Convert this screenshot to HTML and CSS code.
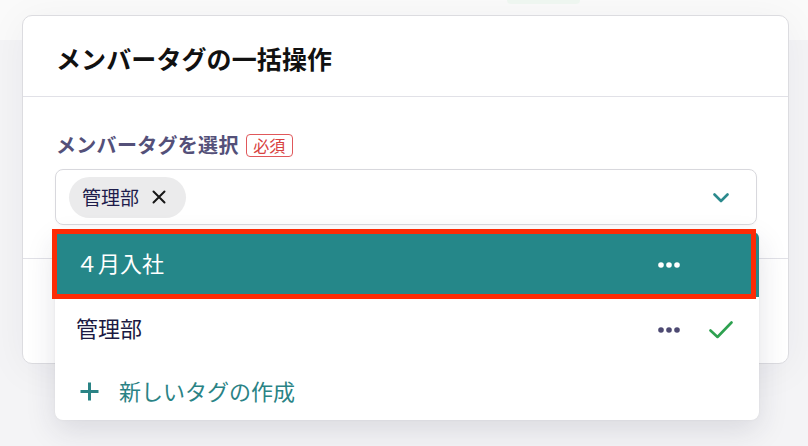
FILE: index.html
```html
<!DOCTYPE html>
<html lang="ja">
<head>
<meta charset="utf-8">
<link rel="stylesheet" href="styles.css">
</head>
<body>
<div class="top-strip"><span class="top-pill"></span></div>
<section class="card">
  <header class="card-head">
    <h1 class="card-title">メンバータグの一括操作</h1>
  </header>
  <div class="card-body">
    <div class="field-label">
      <span class="label-text">メンバータグを選択</span>
      <span class="badge">必須</span>
    </div>
    <div class="select-wrap">
      <div class="select">
        <span class="chip">
          <span class="chip-text">管理部</span>
          <svg class="chip-x" width="14" height="14" viewBox="0 0 14 14"><path d="M1.5 1.5 L12.5 12.5 M12.5 1.5 L1.5 12.5" stroke="#161616" stroke-width="2" stroke-linecap="round" fill="none"/></svg>
        </span>
        <svg class="chevron" width="16" height="10" viewBox="0 0 16 10"><path d="M1.5 1.5 L8 8 L14.5 1.5" stroke="#2b8a8d" stroke-width="2.6" stroke-linecap="round" stroke-linejoin="round" fill="none"/></svg>
      </div>
      <div class="menu">
        <div class="menu-item active">
          <span class="item-text">４月入社</span>
          <svg class="dots" width="22" height="6" viewBox="0 0 22 6"><circle cx="3" cy="3" r="2.8" fill="#fff"/><circle cx="11" cy="3" r="2.8" fill="#fff"/><circle cx="19" cy="3" r="2.8" fill="#fff"/></svg>
          <span class="check-slot"></span>
        </div>
        <div class="menu-item">
          <span class="item-text">管理部</span>
          <svg class="dots" width="22" height="6" viewBox="0 0 22 6"><circle cx="3" cy="3" r="2.8" fill="#4d4a72"/><circle cx="11" cy="3" r="2.8" fill="#4d4a72"/><circle cx="19" cy="3" r="2.8" fill="#4d4a72"/></svg>
          <span class="check-slot"><svg width="24" height="18" viewBox="0 0 24 18"><path d="M1.5 9.5 L8.5 16 L22.5 1.5" stroke="#2ea150" stroke-width="2.6" stroke-linecap="round" stroke-linejoin="round" fill="none"/></svg></span>
        </div>
        <div class="menu-create">
          <svg class="plus" width="19" height="19" viewBox="0 0 19 19"><path d="M9.5 0.5 V18.5 M0.5 9.5 H18.5" stroke="#2a8385" stroke-width="3" fill="none"/></svg>
          <span class="create-text">新しいタグの作成</span>
        </div>
        <div class="annotation"></div>
      </div>
    </div>
  </div>
  <footer class="card-foot"></footer>
</section>
</body>
</html>
```
FILE: styles.css
```css
* { box-sizing: border-box; }
html, body { margin: 0; padding: 0; }
body {
  width: 808px;
  height: 446px;
  overflow: hidden;
  background: linear-gradient(#fafafa 0 40px, #f4f4f6 40px);
  font-family: "Noto Sans CJK JP", "Noto Sans", sans-serif;
}
.top-strip {
  height: 15px;
  display: flex;
}
.top-pill {
  display: block;
  margin-left: 507px;
  width: 73px;
  height: 4px;
  background: #eef6f0;
  border-radius: 0 0 6px 6px;
}
.card {
  margin-left: 22px;
  width: 767px;
  background: #fff;
  border: 1px solid #dcdce0;
  border-radius: 10px;
  box-shadow: 0 6px 40px rgba(30, 30, 60, 0.05);
}
.card-head {
  height: 81px;
  border-bottom: 1px solid #e1e1e7;
  display: flex;
  align-items: center;
  padding-left: 33px;
}
.card-title {
  margin: 0;
  font-size: 25px;
  font-weight: 700;
  letter-spacing: 0.1px;
  color: #111;
  line-height: 1;
  padding-top: 4px;
}
.card-body {
  padding: 37px 31px 33px 32px;
  border-bottom: 1px solid #e1e1e7;
}
.field-label {
  display: flex;
  align-items: center;
  height: 23px;
  margin-bottom: 12px;
}
.label-text {
  font-size: 20px;
  font-weight: 700;
  letter-spacing: 0.3px;
  color: #545079;
  margin-left: 1px;
  margin-right: 7px;
  line-height: 1;
  padding-bottom: 2px;
}
.badge {
  height: 23px;
  width: 47px;
  border: 1px solid #e0585b;
  border-radius: 4px;
  color: #d8423f;
  font-size: 16px;
  line-height: 20px;
  text-align: center;
}
.select-wrap {
  position: relative;
}
.select {
  height: 56px;
  border: 1px solid #d8d8dd;
  border-radius: 8px;
  display: flex;
  align-items: center;
  justify-content: space-between;
  padding: 0 27px 0 13px;
  box-shadow: 0 1px 3px rgba(0,0,0,0.03);
}
.chip {
  height: 41px;
  width: 117px;
  border-radius: 21px;
  background: #ebebec;
  display: flex;
  align-items: center;
  padding-left: 13px;
}
.chip-text {
  font-size: 19px;
  color: #1e1c4b;
  margin-right: 13px;
  line-height: 1;
  padding-bottom: 2px;
}
.chevron { margin-top: 1px; }
.menu {
  position: absolute;
  top: 63px;
  left: 0;
  width: 704px;
  height: 188px;
  background: #fff;
  border-radius: 8px;
  box-shadow: 0 10px 30px rgba(40, 40, 70, 0.13), 0 0 3px rgba(0,0,0,0.05);
  display: flex;
  flex-direction: column;
}
.menu-item {
  height: 65px;
  display: flex;
  align-items: center;
  padding: 0 26px 0 21px;
}
.menu-item.active {
  background: #258789;
  border-radius: 6px 6px 0 0;
}
.item-text {
  flex: 1;
  font-size: 22px;
  line-height: 1;
  padding-bottom: 6px;
  color: #1b1942;
}
.active .item-text { color: #fff; }
.check-slot {
  width: 24px;
  height: 18px;
  margin-left: 29px;
  display: flex;
}
.menu-create {
  height: 58px;
  display: flex;
  align-items: center;
  padding-left: 25px;
}
.plus { margin-right: 20px; }
.create-text {
  font-size: 22px;
  line-height: 1;
  padding-bottom: 2px;
  color: #2a8385;
}
.annotation {
  position: absolute;
  left: -3px;
  top: -3px;
  width: 704px;
  height: 70px;
  border: 5px solid #fd2b05;
  pointer-events: none;
}
.card-foot {
  height: 104px;
}
```
